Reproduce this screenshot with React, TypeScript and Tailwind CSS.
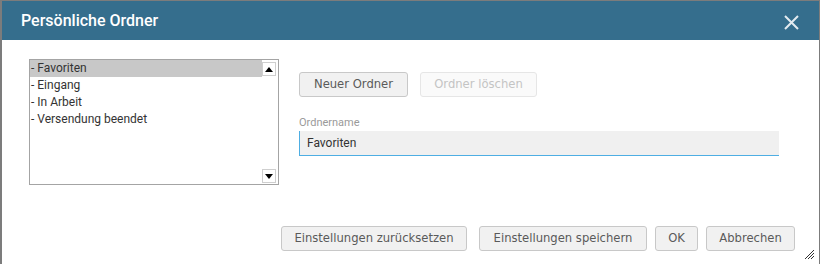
import { useState } from "react";

const folders = ["- Favoriten", "- Eingang", "- In Arbeit", "- Versendung beendet"];

const btn =
  "h-[25px] rounded-[3px] border border-[#c8c8c8] bg-[#f1f1f1] text-[11.6px] text-[#5a5a5a] font-['DejaVu_Sans',sans-serif] flex items-center justify-center";

function Arrow({ up }: { up?: boolean }) {
  return (
    <span className="flex h-[14px] w-[14px] items-center justify-center border border-[#cfcfcf] bg-white">
      <svg width="8" height="5" viewBox="0 0 8 5">
        {up ? <path d="M0 5 L4 0 L8 5 Z" fill="#000" /> : <path d="M0 0 L8 0 L4 5 Z" fill="#000" />}
      </svg>
    </span>
  );
}

export default function App() {
  const [selected, setSelected] = useState(0);
  const [name, setName] = useState("Favoriten");

  return (
    <div className="relative flex h-[264px] w-[820px] flex-col overflow-hidden border-l-2 border-r border-t border-[#7c7c7c] bg-white font-['Roboto',sans-serif]">
      {/* title bar */}
      <div className="flex h-[39px] shrink-0 items-center justify-between bg-[#356e8d] pl-[19px] pr-[20px]">
        <span className="text-[16px] font-medium text-white">Persönliche Ordner</span>
        <svg width="15" height="15" viewBox="0 0 15 15" className="mt-[3px]">
          <path d="M1 1 L14 14 M14 1 L1 14" stroke="#e3ebf0" strokeWidth="2" />
        </svg>
      </div>

      <div className="flex pl-[27px] pt-[19px]">
        {/* folder list */}
        <div className="flex h-[126px] w-[250px] border border-[#a4a4a4]">
          <ul className="flex-1">
            {folders.map((f, i) => (
              <li
                key={f}
                onClick={() => setSelected(i)}
                className={`h-[17px] pl-[1px] text-[12px] leading-[17px] text-[#333] ${
                  i === selected ? "bg-[#c8c8c8]" : ""
                }`}
              >
                {f}
              </li>
            ))}
          </ul>
          <div className="flex w-[16px] flex-col justify-between pb-[1px] pt-[2px]">
            <Arrow up />
            <Arrow />
          </div>
        </div>

        {/* right column */}
        <div className="ml-[20px] flex flex-col pt-[13px]">
          <div className="flex gap-[12px]">
            <button className={`${btn} w-[109px]`}>Neuer Ordner</button>
            <button
              disabled
              className="flex h-[25px] w-[117px] items-center justify-center rounded-[3px] border border-[#e6e6e6] bg-[#fafafa] font-['DejaVu_Sans',sans-serif] text-[11.6px] text-[#c4c4c4]"
            >
              Ordner löschen
            </button>
          </div>
          <label className="mt-[19px] text-[11px] leading-[14px] text-[#9a9a9a]">Ordnername</label>
          <input
            value={name}
            onChange={(e) => setName(e.target.value)}
            className="mt-[1px] h-[25px] w-[480px] border-b border-l border-[#4eaee3] bg-[#f0f0f0] px-[7px] text-[12px] text-[#333] outline-none"
          />
        </div>
      </div>

      {/* footer buttons */}
      <div className="mt-auto flex justify-end pb-[13px] pr-[24px]">
        <button className={`${btn} w-[186px]`}>Einstellungen zurücksetzen</button>
        <button className={`${btn} ml-[12px] w-[168px]`}>Einstellungen speichern</button>
        <button className={`${btn} ml-[8px] w-[43px]`}>OK</button>
        <button className={`${btn} ml-[8px] w-[89px]`}>Abbrechen</button>
      </div>

      {/* resize grip */}
      <svg width="11" height="11" viewBox="0 0 11 11" className="absolute bottom-[4px] right-[4px]">
        <path d="M1 10 L10 1 M4 10 L10 4 M7 10 L10 7" stroke="#333" strokeWidth="1" />
      </svg>
    </div>
  );
}
